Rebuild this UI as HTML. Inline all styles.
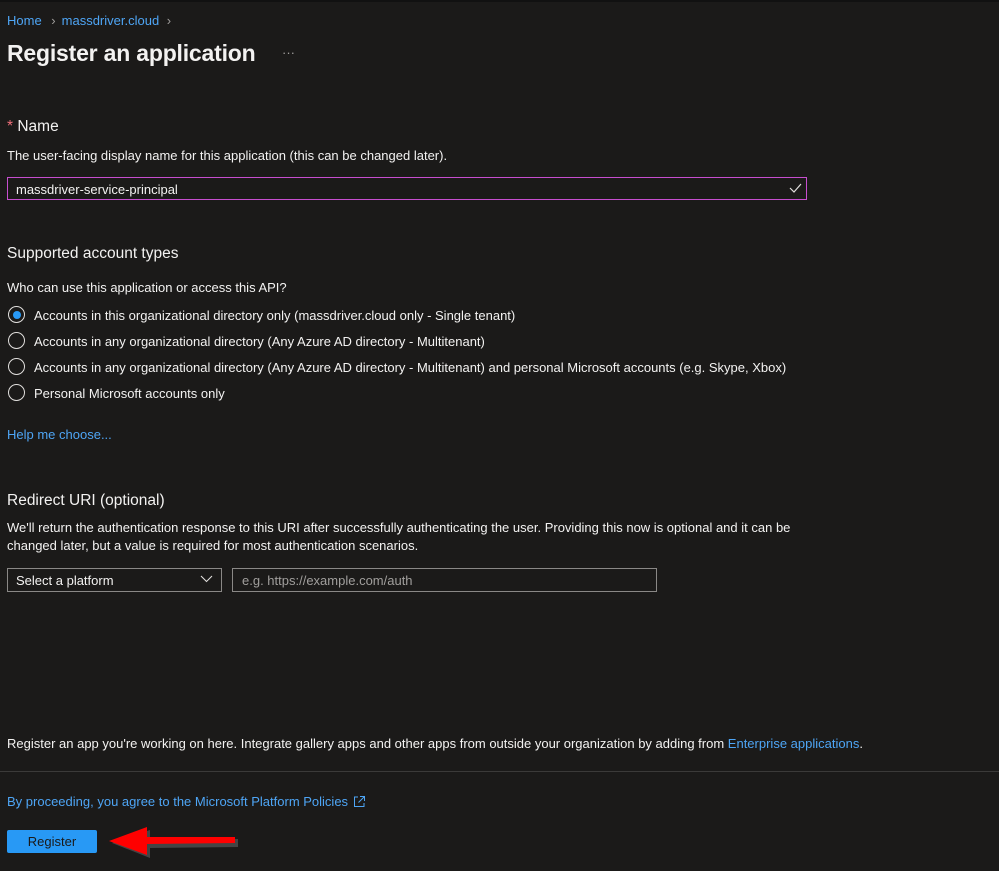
<!DOCTYPE html>
<html><head><meta charset="utf-8"><style>
body{margin:0;width:999px;height:871px;background:#1b1a19;color:#f3f2f1;font-family:"Liberation Sans",sans-serif;font-size:13px;position:relative;overflow:hidden}
.a{position:absolute;white-space:nowrap}
.l{color:#4ea5f5}
.h{font-size:15.5px}
.rad{position:absolute;left:8px;width:15px;height:15px;border:1.5px solid #e1dfdd;border-radius:50%}
</style></head><body>
<div style="position:absolute;left:0;top:0;width:999px;height:2px;background:#111"></div>
<div class="a l" style="left:7px;top:13px;font-size:13px">Home <span style="color:#a19f9d;margin:0 6px">›</span>massdriver.cloud <span style="color:#a19f9d;margin-left:4px">›</span></div>
<div class="a" style="left:7px;top:40px;font-size:23px;font-weight:bold;letter-spacing:-0.2px">Register an application</div>
<div class="a" style="left:282px;top:45px;color:#a19f9d">···</div>
<div class="a h" style="left:7px;top:118px"><span style="color:#f1707b">*</span> Name</div>
<div class="a" style="left:7px;top:148px">The user-facing display name for this application (this can be changed later).</div>
<div style="position:absolute;left:7px;top:177px;width:798px;height:21px;border:1px solid #c74ecf"></div>
<div class="a" style="left:16px;top:182px">massdriver-service-principal</div>
<svg class="a" style="left:789px;top:183px" width="13" height="10"><path d="M1 5l4 4 7-8" stroke="#e1dfdd" fill="none" stroke-width="1.2"/></svg>
<div class="a h" style="left:7px;top:245px">Supported account types</div>
<div class="a" style="left:7px;top:280px">Who can use this application or access this API?</div>
<div class="rad" style="top:306px"><div style="position:absolute;left:3.5px;top:3.5px;width:8px;height:8px;border-radius:50%;background:#2899f5"></div></div>
<div class="a" style="left:34px;top:308px">Accounts in this organizational directory only (massdriver.cloud only - Single tenant)</div>
<div class="rad" style="top:332px"></div>
<div class="a" style="left:34px;top:334px">Accounts in any organizational directory (Any Azure AD directory - Multitenant)</div>
<div class="rad" style="top:358px"></div>
<div class="a" style="left:34px;top:360px">Accounts in any organizational directory (Any Azure AD directory - Multitenant) and personal Microsoft accounts (e.g. Skype, Xbox)</div>
<div class="rad" style="top:384px"></div>
<div class="a" style="left:34px;top:386px">Personal Microsoft accounts only</div>
<div class="a l" style="left:7px;top:427px">Help me choose...</div>
<div class="a h" style="left:7px;top:492px">Redirect URI (optional)</div>
<div class="a" style="left:7px;top:519px;line-height:18px;white-space:normal;width:800px">We'll return the authentication response to this URI after successfully authenticating the user. Providing this now is optional and it can be changed later, but a value is required for most authentication scenarios.</div>
<div style="position:absolute;left:7px;top:568px;width:213px;height:22px;border:1px solid #8a8886"></div>
<div class="a" style="left:16px;top:573px">Select a platform</div>
<svg class="a" style="left:200px;top:575px" width="13" height="8"><path d="M1 1l5.5 5.5L12 1" stroke="#e1dfdd" fill="none" stroke-width="1.1"/></svg>
<div style="position:absolute;left:232px;top:568px;width:423px;height:22px;border:1px solid #8a8886"></div>
<div class="a" style="left:242px;top:573px;color:#a19f9d">e.g. https://example.com/auth</div>
<div class="a" style="left:7px;top:736px">Register an app you're working on here. Integrate gallery apps and other apps from outside your organization by adding from <span class="l">Enterprise applications</span>.</div>
<div style="position:absolute;left:0;top:771px;width:999px;height:1px;background:#3b3a39"></div>
<div class="a l" style="left:7px;top:794px">By proceeding, you agree to the Microsoft Platform Policies</div>
<svg class="a" style="left:353px;top:795px" width="13" height="13"><path d="M5 2H1.5v9.5H11V8M7 1.5h4.5V6M11.5 1.5 5.5 7.5" stroke="#4ea5f5" fill="none"/></svg>
<div style="position:absolute;left:7px;top:830px;width:90px;height:23px;background:#2899f5;border-radius:2px;color:#1b1a19;text-align:center;line-height:23px">Register</div>
<svg class="a" style="left:104px;top:826px" width="135" height="34"><path d="M6 15 L44 2 L44 12 L132 11 L132 19 L44 20 L44 30 Z" fill="#444" transform="translate(2,2)"/><path d="M5 15 L43 1 L43 11 L131 11 L131 17 L43 18 L43 29 Z" fill="#f00"/></svg>
</body></html>
